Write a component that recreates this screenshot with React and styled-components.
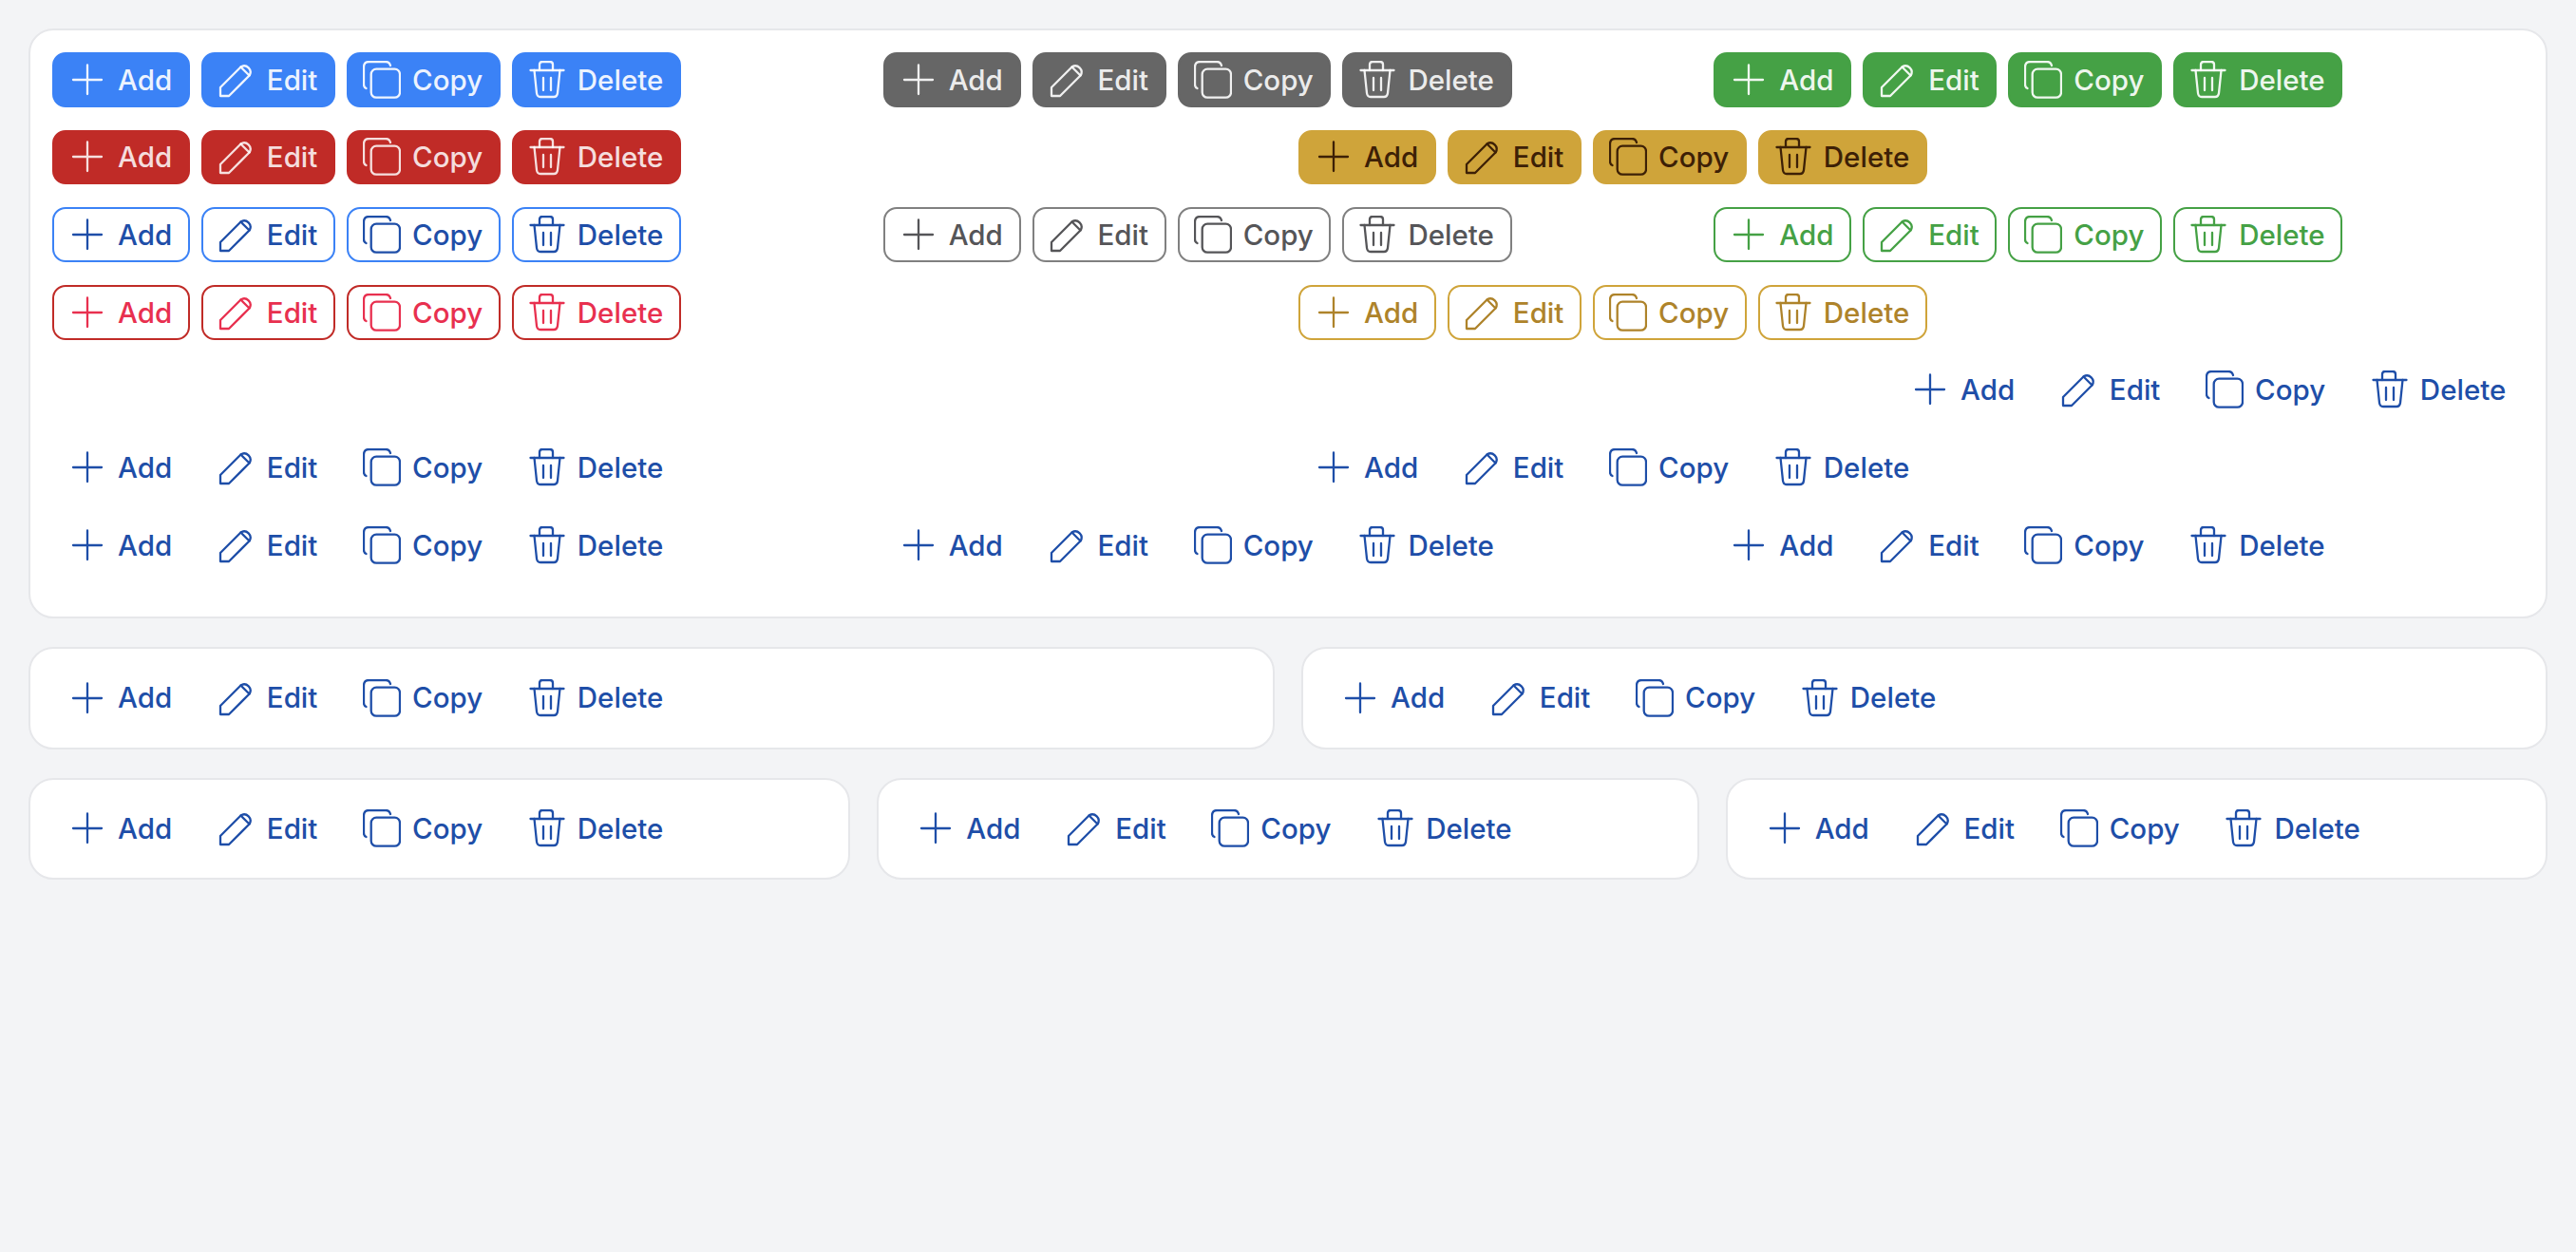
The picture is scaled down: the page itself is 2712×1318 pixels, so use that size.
import React from 'react';
import styled, { createGlobalStyle } from 'styled-components';

const GlobalStyle = createGlobalStyle`
  html, body {
    margin: 0;
    padding: 0;
    background: #f3f4f6;
  }
  * {
    box-sizing: border-box;
  }
`;

const palette = {
  blue: {
    solid: '#3b82f6', onSolid: 'rgba(255, 255, 255, 0.92)',
    line: '#3b82f6', text: '#1e4ea8',
  },
  gray: {
    solid: '#666666', onSolid: 'rgba(255, 255, 255, 0.9)',
    line: '#808080', text: '#555558',
  },
  green: {
    solid: '#45a145', onSolid: 'rgba(255, 255, 255, 0.92)',
    line: '#45a145', text: '#45a145',
  },
  red: {
    solid: '#c02b27', onSolid: 'rgba(255, 255, 255, 0.85)',
    line: '#c02b27', text: '#e8304f',
  },
  gold: {
    solid: '#cfa43a', onSolid: '#3d2006',
    line: '#cfa43a', text: '#ae832a',
  },
};

const borderColor = ({ $variant, $tone }) => {
  if ($variant === 'ghost') return 'transparent';
  return $variant === 'solid' ? palette[$tone].solid : palette[$tone].line;
};

const Page = styled.div`
  display: flex;
  flex-direction: column;
  gap: 30px;
  min-height: 100vh;
  padding: 30px;
  background: #f3f4f6;
  font-family: Inter, "Liberation Sans", sans-serif;
`;

const Card = styled.section`
  padding: 23px;
  padding-bottom: ${(p) => (p.$tall ? '46.3px' : '23px')};
  background: #ffffff;
  border: 2px solid #e6e7ea;
  border-radius: 26px;
`;

const CardRow = styled.div`
  display: grid;
  grid-template-columns: repeat(${(p) => p.$count}, 1fr);
  gap: 30px 28px;
`;

const Stack = styled.div`
  display: flex;
  flex-direction: column;
  gap: 24px;
`;

const GridRow = styled.div`
  display: grid;
  grid-template-columns: repeat(${(p) => p.$columns}, 1fr);
  gap: 24px 22px;
`;

const EndRow = styled.div`
  display: flex;
  justify-content: flex-end;
`;

const Group = styled.div`
  display: flex;
  gap: 12px;
`;

const Button = styled.button`
  display: inline-flex;
  align-items: center;
  gap: 12px;
  height: 57.67px;
  padding: 0 16.7px 0 15px;
  border: 2px solid ${borderColor};
  border-radius: 14px;
  background: ${(p) => (p.$variant === 'solid' ? palette[p.$tone].solid : 'transparent')};
  color: ${(p) => (p.$variant === 'solid' ? palette[p.$tone].onSolid : palette[p.$tone].text)};
  font-family: inherit;
  font-size: 29.5px;
  font-weight: 500;
  line-height: 1;
  cursor: pointer;
`;

const Label = styled.span`
  padding-top: 1px;
`;

const IconBox = styled.svg`
  flex: none;
  width: 40px;
  height: 40px;
  fill: none;
  stroke: currentColor;
  stroke-width: 2.3;
  stroke-linecap: round;
  stroke-linejoin: round;
`;

const AddIcon = () => (
  <IconBox viewBox="0 0 40 40">
    <path d="M5 20H35M20 4.5V35" />
  </IconBox>
);

const EditIcon = () => (
  <IconBox viewBox="0 0 40 40">
    <path d="M3 28L24.5 6.5A6.5 6.5 0 0 1 33.5 15.5L12 37H3Z" />
    <path d="M24.5 6.5L33.5 15.5" />
  </IconBox>
);

const CopyIcon = () => (
  <IconBox viewBox="0 0 40 40">
    <rect x="8.7" y="8.7" width="30.3" height="30" rx="5.5" />
    <path d="M3.5 29Q1 28 1 25V6.5Q1 1 6.5 1H24Q28 1 29 5" />
  </IconBox>
);

const DeleteIcon = () => (
  <IconBox viewBox="0 0 40 40">
    <path d="M2.5 10H37.5" />
    <path d="M12 10V4Q12 1 15 1H23Q26 1 26 4V10" />
    <path d="M6.5 10L9 34Q9.5 38 13 38H27Q30.5 38 31 34L33.5 10" />
    <path d="M16 18V31M24 18V31" />
  </IconBox>
);

const actions = [
  { label: 'Add', Icon: AddIcon },
  { label: 'Edit', Icon: EditIcon },
  { label: 'Copy', Icon: CopyIcon },
  { label: 'Delete', Icon: DeleteIcon },
];

function ButtonGroup({ tone = 'blue', variant = 'ghost' }) {
  return (
    <Group>
      {actions.map(({ label, Icon }) => (
        <Button key={label} $tone={tone} $variant={variant}>
          <Icon />
          <Label>{label}</Label>
        </Button>
      ))}
    </Group>
  );
}

export default function App() {
  return (
    <>
      <GlobalStyle />
      <Page>
        <Card $tall>
          <Stack>
            <GridRow $columns={3}>
              <ButtonGroup tone="blue" variant="solid" />
              <ButtonGroup tone="gray" variant="solid" />
              <ButtonGroup tone="green" variant="solid" />
            </GridRow>
            <GridRow $columns={2}>
              <ButtonGroup tone="red" variant="solid" />
              <ButtonGroup tone="gold" variant="solid" />
            </GridRow>
            <GridRow $columns={3}>
              <ButtonGroup tone="blue" variant="outline" />
              <ButtonGroup tone="gray" variant="outline" />
              <ButtonGroup tone="green" variant="outline" />
            </GridRow>
            <GridRow $columns={2}>
              <ButtonGroup tone="red" variant="outline" />
              <ButtonGroup tone="gold" variant="outline" />
            </GridRow>
            <EndRow>
              <ButtonGroup />
            </EndRow>
            <GridRow $columns={2}>
              <ButtonGroup />
              <ButtonGroup />
            </GridRow>
            <GridRow $columns={3}>
              <ButtonGroup />
              <ButtonGroup />
              <ButtonGroup />
            </GridRow>
          </Stack>
        </Card>
        <CardRow $count={2}>
          <Card><ButtonGroup /></Card>
          <Card><ButtonGroup /></Card>
        </CardRow>
        <CardRow $count={3}>
          <Card><ButtonGroup /></Card>
          <Card><ButtonGroup /></Card>
          <Card><ButtonGroup /></Card>
        </CardRow>
      </Page>
    </>
  );
}
